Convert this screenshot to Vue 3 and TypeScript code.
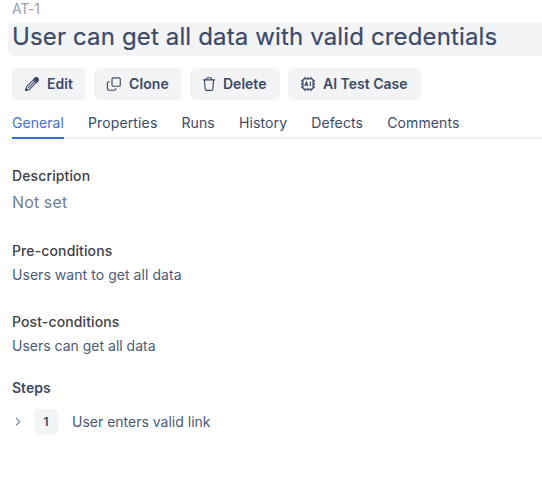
<script setup lang="ts">
import { ref } from 'vue'

interface Step {
  id: number
  text: string
}

const tabs: string[] = ['General', 'Properties', 'Runs', 'History', 'Defects', 'Comments']
const active = ref<string>('General')
const steps: Step[] = [{ id: 1, text: 'User enters valid link' }]
</script>

<template>
  <main class="case">
    <div class="case-id">AT-1</div>
    <h1 class="title">User can get all data with valid credentials</h1>

    <div class="actions">
      <button class="btn edit">
        <svg width="16" height="16" viewBox="0 0 16 16" fill="none" stroke="currentColor" stroke-width="1.1" stroke-linejoin="round">
          <path d="M1.6 14.4 2.8 10.4 10.9 2.3a1.9 1.9 0 0 1 2.8 2.8L5.6 13.2Z" />
          <path d="m9.3 3.9 2.8 2.8M4.2 11.8l6.5-6.5" />
          <path d="m10 3.2.9-.9a1.9 1.9 0 0 1 2.8 2.8l-.9.9ZM1.6 14.4l.6-2 1.4 1.4Z" fill="currentColor" />
        </svg>
        <span>Edit</span>
      </button>
      <button class="btn clone">
        <svg width="16" height="16" viewBox="0 0 16 16" fill="none" stroke="currentColor" stroke-width="1.15">
          <rect x="6" y="1.8" width="8.3" height="8.4" rx="1.3" />
          <path d="M3.9 5.7H2.8a1.4 1.4 0 0 0-1.4 1.4v5.7a1.4 1.4 0 0 0 1.4 1.4h5.7a1.4 1.4 0 0 0 1.4-1.4v-.6" />
        </svg>
        <span>Clone</span>
      </button>
      <button class="btn delete">
        <svg width="14" height="16" viewBox="0 0 14 16" fill="none" stroke="currentColor" stroke-width="1.15" stroke-linecap="round" stroke-linejoin="round">
          <path d="M1.4 3.8h11.2M4.2 3.6 5.1 1.7h3.8l.9 1.9M2.4 4l.8 9.2q.1 1.1 1.2 1.1h5.2q1.1 0 1.2-1.1L11.6 4" />
        </svg>
        <span>Delete</span>
      </button>
      <button class="btn ai">
        <svg width="16" height="16" viewBox="0 0 16 16" fill="none" stroke="currentColor" stroke-width="1.3">
          <rect x="2.9" y="2.9" width="10.2" height="10.2" rx="1.3" />
          <path d="M5 1v2M8 1v2M11 1v2M5 13v2M8 13v2M11 13v2M1 5h2M1 8h2M1 11h2M13 5h2M13 8h2M13 11h2" />
          <path d="m4.8 10 1.6-4 1.6 4M5.4 8.9h2M10.4 5.8V10" stroke-width="1.15" />
        </svg>
        <span>AI Test Case</span>
      </button>
    </div>

    <nav class="tabs">
      <a v-for="tab in tabs" :key="tab" class="tab" :class="{ active: tab === active }" @click="active = tab">{{ tab }}</a>
    </nav>

    <section class="section description">
      <h2>Description</h2>
      <p class="empty">Not set</p>
    </section>
    <section class="section pre">
      <h2>Pre-conditions</h2>
      <p>Users want to get all data</p>
    </section>
    <section class="section post">
      <h2>Post-conditions</h2>
      <p>Users can get all data</p>
    </section>
    <section class="section steps">
      <h2>Steps</h2>
      <div v-for="step in steps" :key="step.id" class="step">
        <svg width="12" height="12" viewBox="0 0 12 12" fill="none" stroke="currentColor" stroke-width="1.1">
          <path d="M4 2 7.8 5.7 4 9.4" />
        </svg>
        <span class="number">{{ step.id }}</span>
        <span class="text">{{ step.text }}</span>
      </div>
    </section>
  </main>
</template>

<style>
body {
  background: #fff;
  overflow: hidden;
}
</style>

<style scoped>
.case {
  box-sizing: border-box;
  height: 484px;
  padding-left: 12px;
  font-family: Inter, sans-serif;
  font-size: 14px;
  line-height: 20px;
  color: #3b4a69;
}
.case-id {
  height: 23px;
  line-height: 18px;
  letter-spacing: -0.2px;
  color: #97a0b4;
}
.title {
  margin: 0 0 0 -4px;
  padding-left: 4px;
  height: 33px;
  line-height: 27px;
  font-size: 24px;
  font-weight: 400;
  letter-spacing: 0.14px;
  -webkit-text-stroke: 0.2px #3b4a69;
  background: #f3f4f6;
  border-radius: 3px 0 0 7px;
  white-space: nowrap;
}
.actions {
  display: flex;
  gap: 8px;
  margin-top: 12px;
}
.btn {
  display: flex;
  align-items: center;
  box-sizing: border-box;
  height: 32px;
  padding: 0 0 0 12px;
  gap: 7px;
  border: 0;
  border-radius: 6px;
  background: #f3f4f6;
  color: #3b4a69;
  font: 600 14px/20px Inter, sans-serif;
  white-space: nowrap;
}
.edit { width: 74px; }
.clone { width: 88px; }
.clone span { letter-spacing: 0.1px; }
.delete { width: 90px; }
.ai { width: 133px; }
.tabs {
  display: flex;
  gap: 24px;
  height: 37px;
  padding-top: 2px;
  box-shadow: inset 0 -2px #efeff0;
}
.tab {
  box-sizing: border-box;
  height: 37px;
  line-height: 42px;
  letter-spacing: 0.13px;
  white-space: nowrap;
  cursor: pointer;
}
.tab.active {
  letter-spacing: 0.06px;
  color: #3f72d2;
  border-bottom: 2px solid #3b6fd0;
}
.section h2 {
  margin: 0;
  font-size: 14px;
  line-height: 20px;
  font-weight: 500;
  letter-spacing: 0.12px;
  color: #404147;
}
.section p {
  margin: 4px 0 0;
  letter-spacing: 0.05px;
  color: #4b5a78;
}
.description { margin-top: 27px; }
.section .empty {
  margin-top: 4px;
  font-size: 16px;
  line-height: 24px;
  letter-spacing: 0.12px;
  color: #727e95;
}
.pre { margin-top: 27px; }
.post { margin-top: 27px; }
.section.post p { letter-spacing: 0; }
.steps { margin-top: 22px; }
.steps h2 {
  font-weight: 600;
  letter-spacing: 0;
  color: #3b4a69;
}
.step {
  display: flex;
  align-items: center;
  margin-top: 11px;
  color: #4b5a78;
}
.step svg {
  color: #76819a;
}
.number {
  width: 24px;
  height: 26px;
  margin: 0 14px 0 10px;
  border-radius: 5px;
  background: #f3f4f6;
  color: #3b4a69;
  font-size: 12px;
  font-weight: 600;
  line-height: 26px;
  text-align: center;
}
.step .text {
  line-height: 20px;
  padding-bottom: 1px;
}
</style>
